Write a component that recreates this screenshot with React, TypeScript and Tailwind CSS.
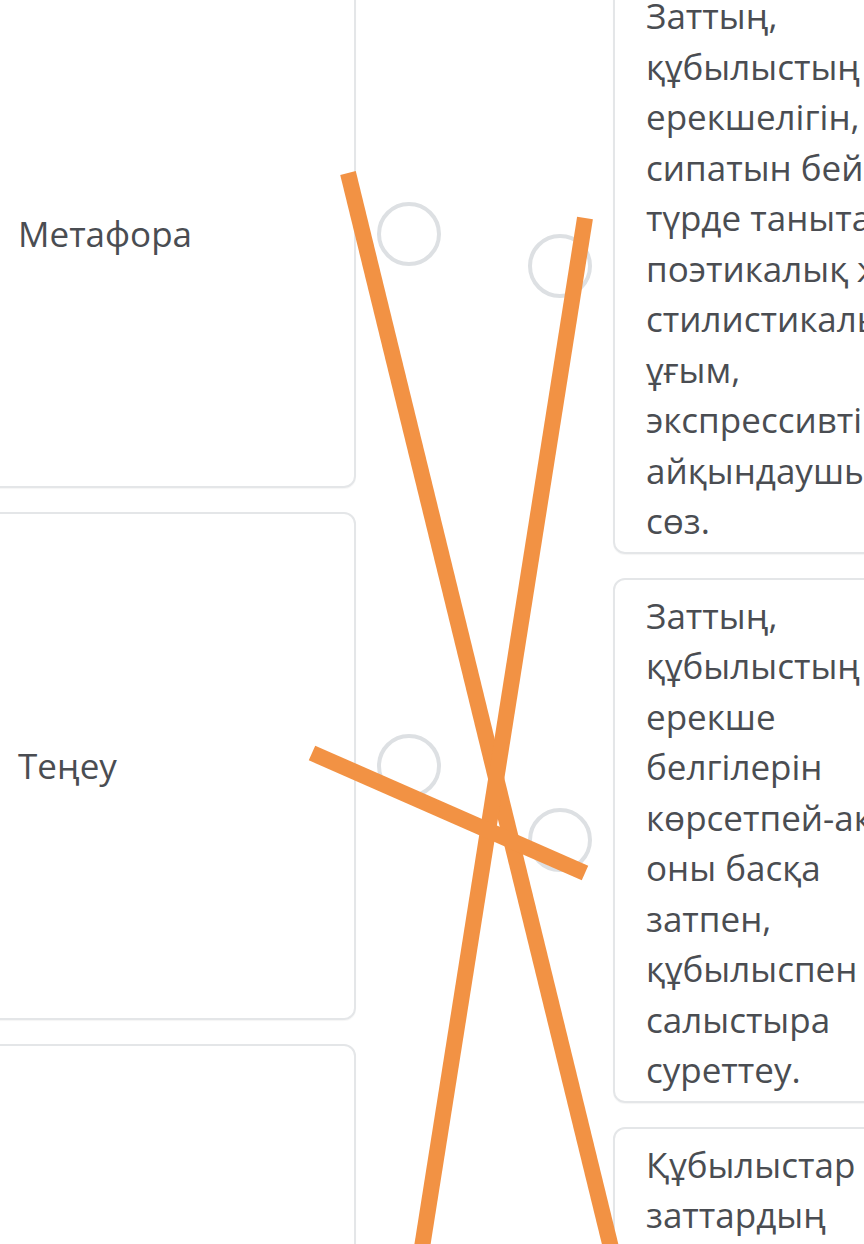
const leftItems = ["Метафора", "Теңеу", "Эпитет"];

// line breaks kept as in the screenshot
const rightItems = [
  ["Заттың,", "құбылыстың", "ерекшелігін,", "сипатын бейнелі", "түрде танытатын", "поэтикалық және", "стилистикалық", "ұғым,", "экспрессивтік", "айқындаушы", "сөз."],
  ["Заттың,", "құбылыстың", "ерекше", "белгілерін", "көрсетпей-ақ,", "оны басқа", "затпен,", "құбылыспен", "салыстыра", "суреттеу."],
  ["Құбылыстар", "заттардың", "белгілерін,", "қасиеттерін", "бір-біріне", "ауыстыра", "отырып,", "бейнелеу."],
];

// pen strokes drawn over the screenshot
const strokes = [
  { x1: 348, y1: 173, x2: 614, y2: 1260 },
  { x1: 585, y1: 218, x2: 420, y2: 1260 },
  { x1: 312, y1: 753, x2: 585, y2: 873 },
];

function Dot() {
  return <div className="size-[64px] shrink-0 rounded-full border-4 border-[#dde0e3] bg-white" />;
}

export default function App() {
  return (
    <div className="relative h-[1244px] w-[864px] overflow-hidden bg-white font-['Open_Sans',sans-serif] text-[35px] leading-[50.5px] text-[#4a4d52]">
      <div className="-ml-[15px] flex items-start">
        <div className="-mt-[20px] flex flex-col gap-[24px]">
          {leftItems.map((text) => (
            <div key={text} className="flex items-center gap-[21px]">
              <div className="flex h-[508px] w-[371px] shrink-0 items-center rounded-[12px] border-2 border-[#e4e6e8] pl-[31px] shadow-[0_1px_1px_rgba(0,0,0,0.04)]">
                {text}
              </div>
              <Dot />
            </div>
          ))}
        </div>
        <div className="-mt-[22px] ml-[87px] flex flex-col gap-[24px]">
          {rightItems.map((lines, i) => (
            <div key={i} className="flex items-center gap-[21px]">
              <Dot />
              <div className="w-[380px] shrink-0 rounded-[12px] border-2 border-[#e4e6e8] pt-[11px] pb-[5px] pl-[31px] shadow-[0_1px_1px_rgba(0,0,0,0.04)]">
                <p className="whitespace-nowrap">
                  {lines.map((line, j) => (
                    <span key={j}>
                      {line}
                      {j < lines.length - 1 && <br />}
                    </span>
                  ))}
                </p>
              </div>
            </div>
          ))}
        </div>
      </div>

      <svg className="pointer-events-none absolute inset-0" width="864" height="1244" viewBox="0 0 864 1244">
        {strokes.map((s, i) => (
          <line key={i} {...s} stroke="#f29244" strokeWidth="16" strokeLinecap="butt" />
        ))}
      </svg>
    </div>
  );
}
